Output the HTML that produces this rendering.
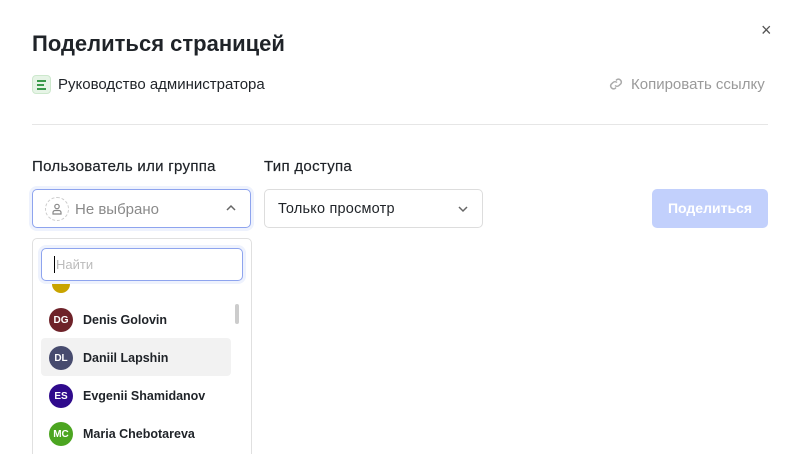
<!DOCTYPE html>
<html><head><meta charset="utf-8"><style>
*{box-sizing:border-box;margin:0;padding:0}
html,body{width:797px;height:454px;overflow:hidden}
body{background:#fff;font-family:"Liberation Sans",sans-serif;color:#1f2328;position:relative}
.a{position:absolute;white-space:nowrap}
.av{position:absolute;left:49px;width:24px;height:24px;border-radius:50%;color:#fff;font-size:10px;font-weight:bold;display:flex;align-items:center;justify-content:center}
.nm{position:absolute;left:83px;font-size:12.5px;font-weight:bold;color:#1f2328}
</style></head><body>
<div class="a" style="left:761px;top:20px;font-size:18px;color:#555">×</div>
<div class="a" style="left:32px;top:31px;font-size:22px;font-weight:bold">Поделиться страницей</div>
<div class="a" style="left:32px;top:75px;width:19px;height:19px;border-radius:4px;background:#e6f4e6;border:1px solid #cde8cd">
 <div class="a" style="left:4px;top:4px;width:9px;height:1.5px;background:#3a9a4a"></div>
 <div class="a" style="left:4px;top:8px;width:7px;height:1.5px;background:#3a9a4a"></div>
 <div class="a" style="left:4px;top:12px;width:9px;height:1.5px;background:#3a9a4a"></div>
</div>
<div class="a" style="left:58px;top:76px;font-size:15px">Руководство администратора</div>
<svg class="a" style="left:608px;top:76px" width="16" height="16" viewBox="0 0 16 16" fill="none" stroke="#aaa" stroke-width="1.5"><path d="M7 9.5a3 3 0 0 0 4 0l2-2a3 3 0 0 0-4-4l-1 1"/><path d="M9 6.5a3 3 0 0 0-4 0l-2 2a3 3 0 0 0 4 4l1-1"/></svg>
<div class="a" style="left:631px;top:76px;font-size:15px;color:#9a9a9a">Копировать ссылку</div>
<div class="a" style="left:32px;top:124px;width:736px;height:1px;background:#e6e6e6"></div>
<div class="a" style="left:32px;top:158px;font-size:15px;letter-spacing:0.3px;-webkit-text-stroke:0.2px #1f2328">Пользователь или группа</div>
<div class="a" style="left:264px;top:158px;font-size:15px;letter-spacing:0.3px;-webkit-text-stroke:0.2px #1f2328">Тип доступа</div>
<div class="a" style="left:29px;top:186px;width:225px;height:45px;border-radius:8px;background:#eef2fd"></div>
<div class="a" style="left:32px;top:189px;width:219px;height:39px;border:1px solid #8ea4ee;border-radius:5px;background:#fff"></div>
<div class="a" style="left:45px;top:197px;width:24px;height:24px;border-radius:50%;border:1px dashed #ccc"></div>
<svg class="a" style="left:51px;top:203px" width="12" height="12" viewBox="0 0 12 12" fill="none" stroke="#888" stroke-width="1.2"><circle cx="6" cy="3.5" r="2.2"/><path d="M2 11v-1.5a2 2 0 0 1 2-2h4a2 2 0 0 1 2 2V11z"/></svg>
<div class="a" style="left:75px;top:201px;font-size:15px;color:#8a8a8a">Не выбрано</div>
<svg class="a" style="left:225px;top:204px" width="12" height="8" viewBox="0 0 12 8" fill="none" stroke="#666" stroke-width="1.5"><path d="M2 6l4-4 4 4"/></svg>
<div class="a" style="left:264px;top:189px;width:219px;height:39px;border:1px solid #ddd;border-radius:5px"></div>
<div class="a" style="left:278px;top:201px;font-size:14.5px;letter-spacing:0.2px">Только просмотр</div>
<svg class="a" style="left:457px;top:205px" width="12" height="8" viewBox="0 0 12 8" fill="none" stroke="#666" stroke-width="1.5"><path d="M2 2l4 4 4-4"/></svg>
<div class="a" style="left:652px;top:189px;width:116px;height:39px;border-radius:5px;background:#c2d0fc;color:#fff;font-size:14px;font-weight:bold;text-align:center;line-height:39px">Поделиться</div>
<div class="a" style="left:32px;top:238px;width:220px;height:230px;border:1px solid #e0e0e0;border-radius:5px"></div>
<div class="a" style="left:38px;top:245px;width:208px;height:39px;border-radius:8px;background:#eef2fd"></div>
<div class="a" style="left:41px;top:248px;width:202px;height:33px;border:1px solid #8ea4ee;border-radius:5px;background:#fff"></div>
<div class="a" style="left:54px;top:256px;width:1px;height:17px;background:#000"></div>
<div class="a" style="left:56px;top:257px;font-size:13px;color:#bbb">Найти</div>
<div class="a" style="left:52px;top:284px;width:18px;height:9px;border-radius:0 0 9px 9px;background:#c9a400"></div>
<div class="a" style="left:235px;top:304px;width:4px;height:20px;border-radius:2px;background:#ccc"></div>
<div class="a" style="left:41px;top:338px;width:190px;height:38px;border-radius:4px;background:#f2f2f2"></div>
<div class="av" style="top:308px;background:#6e2229">DG</div><div class="nm" style="top:313px">Denis Golovin</div>
<div class="av" style="top:346px;background:#474b6e">DL</div><div class="nm" style="top:351px">Daniil Lapshin</div>
<div class="av" style="top:384px;background:#2f0a8c">ES</div><div class="nm" style="top:389px">Evgenii Shamidanov</div>
<div class="av" style="top:422px;background:#4ca521">MC</div><div class="nm" style="top:427px">Maria Chebotareva</div>
</body></html>
